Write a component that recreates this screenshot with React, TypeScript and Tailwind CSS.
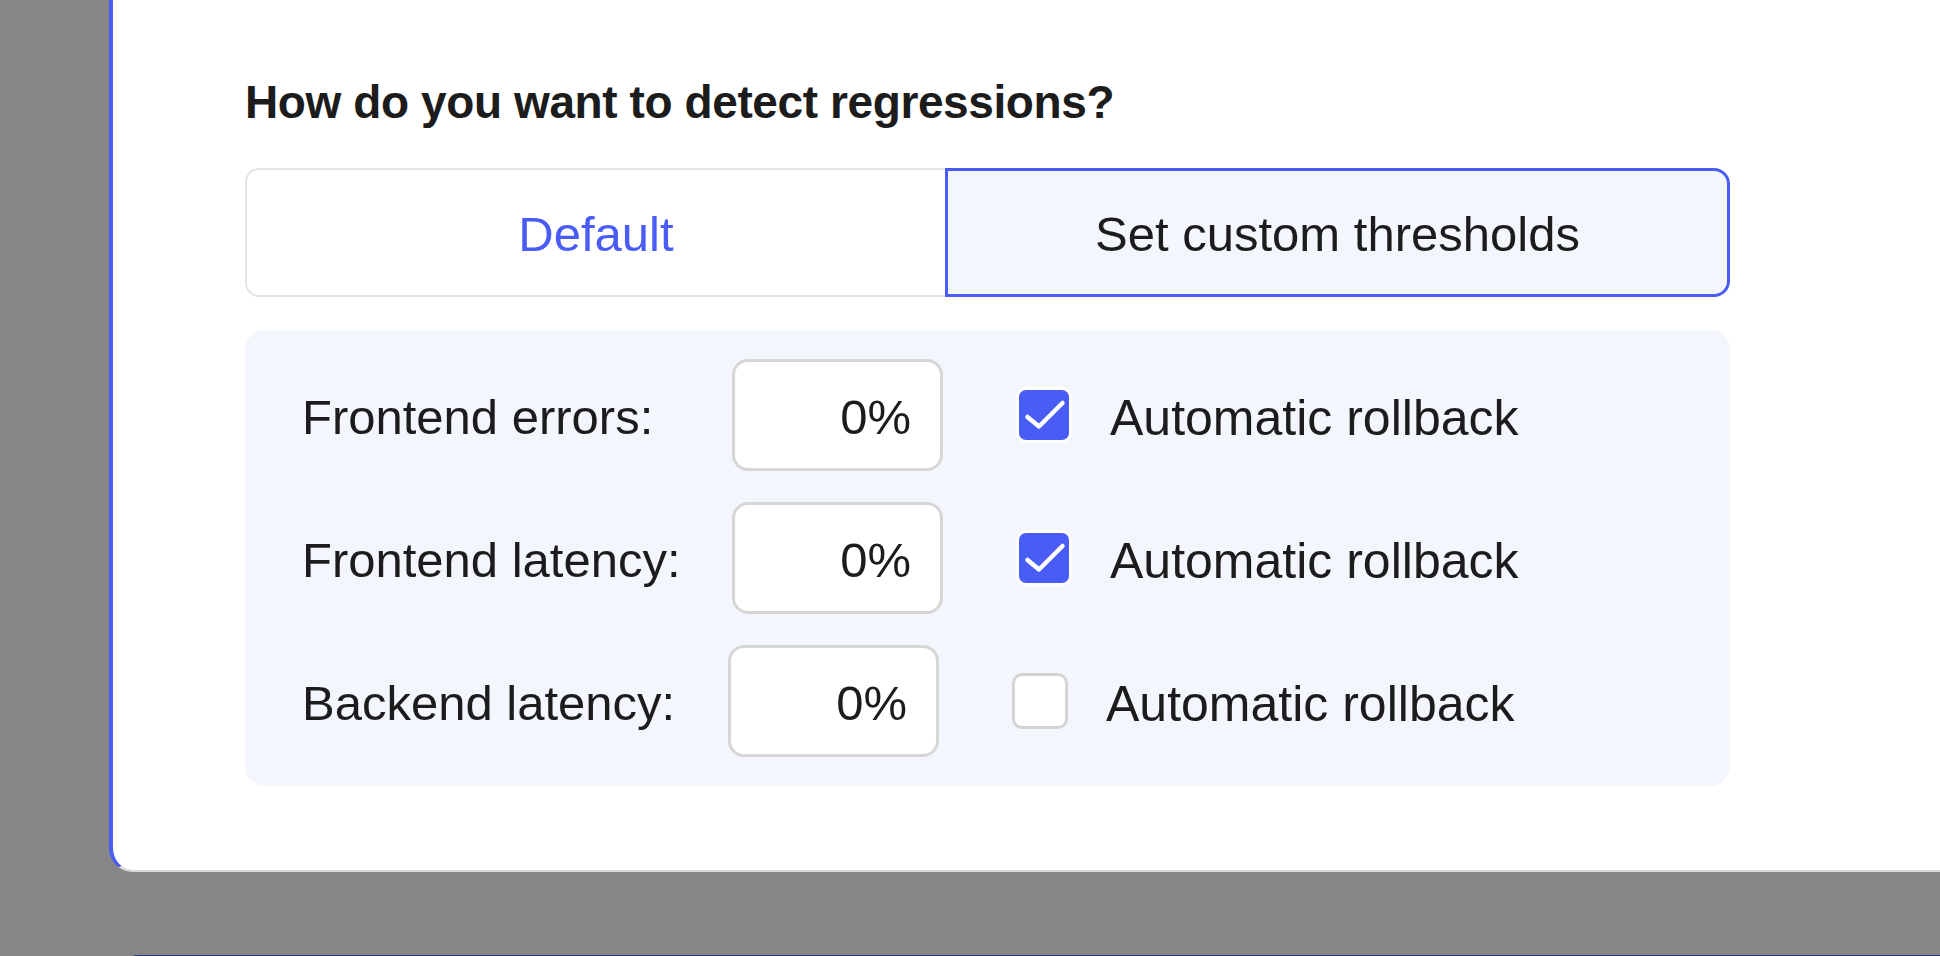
import React from "react";

const rows = [
  { label: "Frontend errors:", value: "0%", checked: true, labelWidth: "w-[430px]" },
  { label: "Frontend latency:", value: "0%", checked: true, labelWidth: "w-[430px]" },
  { label: "Backend latency:", value: "0%", checked: false, labelWidth: "w-[426px]" },
];

const Checkbox = ({ checked }: { checked: boolean }) => {
  if (!checked) {
    return (
      <div className="w-[56px] h-[56px] shrink-0 rounded-[10px] border-[3px] border-[#d4d4d4] bg-white" />
    );
  }
  return (
    <div className="w-[56px] h-[56px] shrink-0 rounded-[10px] border-[3px] border-white bg-[#4a5cf6] flex items-center justify-center">
      <svg width="50" height="50" viewBox="0 0 50 50" fill="none">
        <path
          d="M8.5 27 L20 36.5 L43.5 13"
          stroke="white"
          strokeWidth="4.5"
          strokeLinecap="round"
          strokeLinejoin="round"
        />
      </svg>
    </div>
  );
};

const App = () => {
  return (
    <div className="h-[956px] w-full overflow-hidden bg-[#868686] pl-[109px] font-['Liberation_Sans',Arial,sans-serif] text-[#1c1c1c]">
      <div className="w-[1900px] bg-white border-l-[4px] border-l-[#4a5cf6] border-b-2 border-b-[#d9d9d9] rounded-bl-[24px] pl-[132px] pt-[74px] pb-[84px]">
        <h2 className="text-[46px] leading-[56px] font-bold tracking-[-0.4px]">
          How do you want to detect regressions?
        </h2>

        <div className="flex mt-[38px] h-[129px]">
          <button className="w-[700px] h-full bg-white border-2 border-r-0 border-[#e4e4e4] rounded-l-[14px] text-[49px] text-[#4a5cf6] flex items-center justify-center">
            <span className="pt-[4px]">Default</span>
          </button>
          <button className="w-[785px] h-full bg-[#f3f6fd] border-[3px] border-[#4a5cf6] rounded-r-[16px] text-[49px] flex items-center justify-center">
            <span className="pt-[4px]">Set custom thresholds</span>
          </button>
        </div>

        <div className="w-[1485px] mt-[33px] bg-[#f3f6fd] rounded-[20px] pl-[57px] pt-[29px] pb-[29px] flex flex-col gap-[31px]">
          {rows.map((row) => (
            <div key={row.label} className="flex items-center h-[112px]">
              <span className={`${row.labelWidth} text-[49px] pt-[6px]`}>
                {row.label}
              </span>
              <div className="w-[211px] h-[112px] shrink-0 bg-white border-[3px] border-[#d6d6d6] rounded-[16px] flex items-center justify-end pr-[29px]">
                <span className="text-[49px] pt-[6px]">{row.value}</span>
              </div>
              <div className="ml-[73px]">
                <Checkbox checked={row.checked} />
              </div>
              <span className="ml-[38px] text-[50px] pt-[6px]">
                Automatic rollback
              </span>
            </div>
          ))}
        </div>
      </div>

      <div className="mt-[83px] ml-[13px] h-[20px] w-[1900px] bg-[#2d3a7e] rounded-tl-[16px]" />
    </div>
  );
};

export default App;
